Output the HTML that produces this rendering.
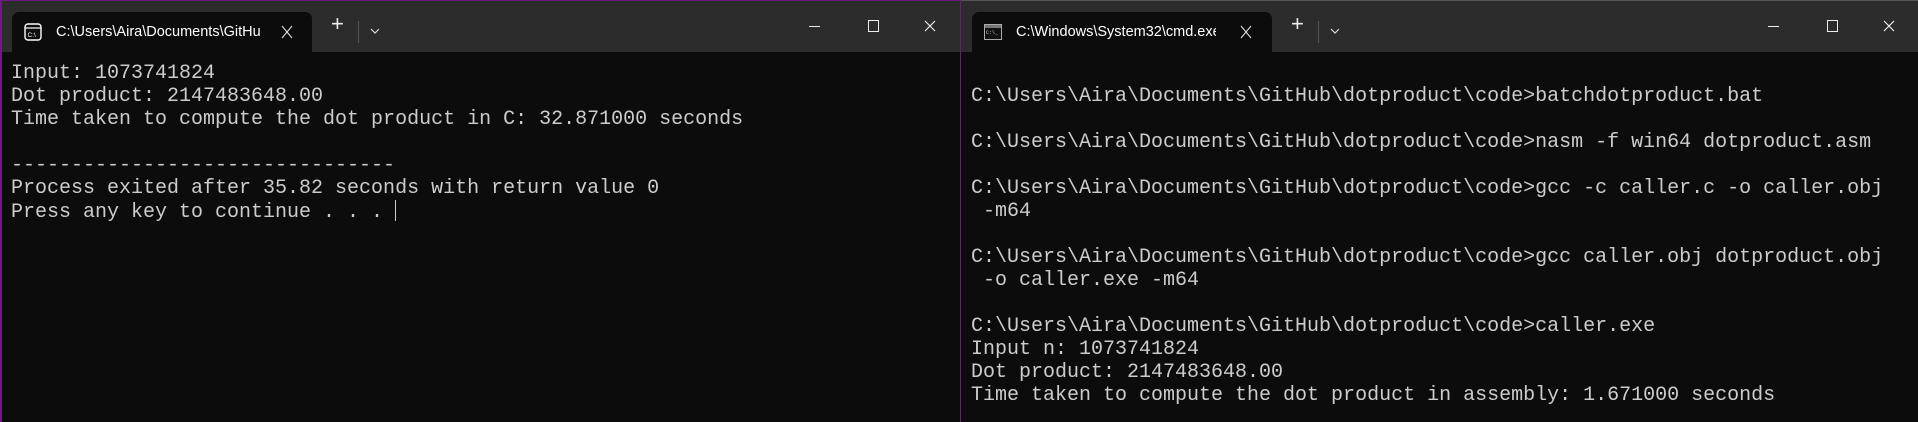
<!DOCTYPE html>
<html><head><meta charset="utf-8"><style>
*{margin:0;padding:0;box-sizing:border-box}
body{width:1918px;height:422px;background:#0c0c0c;position:relative;overflow:hidden;font-family:"Liberation Sans",sans-serif}
.win{position:absolute;top:0;height:422px;background:#0c0c0c}
.bar{position:absolute;left:0;top:0;right:0;height:51px;background:#2c2c2c}
.tab{position:absolute;top:11px;height:40px;width:300px;background:#0c0c0c;border-radius:7px 7px 0 0}
.tt{position:absolute;top:12px;color:#fff;font-size:14.5px;white-space:nowrap}
.x{position:absolute;top:13px}
.term{position:absolute;top:61px;font-family:"Liberation Mono",monospace;font-size:20px;line-height:23px;color:#cccccc;white-space:pre}
.ctl{position:absolute;color:#eee;top:12px;font-size:18px}
</style></head><body>
<div class="win" style="left:0;width:961px;border-left:2px solid #6e1a80;border-top:1px solid #6e1a80;border-right:1px solid #6e1a80">
 <div class="bar"></div>
 <div class="tab" style="left:10px">
  <svg style="position:absolute;left:12px;top:11px" width="18" height="18" viewBox="0 0 18 18"><rect x="1" y="1" width="16" height="16" rx="3" fill="none" stroke="#fff" stroke-width="1.4"/><line x1="1" y1="5" x2="17" y2="5" stroke="#fff" stroke-width="1.2"/><text x="3.5" y="14" font-size="6.5" fill="#fff" font-family="Liberation Sans">C:\</text></svg>
  <div class="tt" style="left:44px;width:204px;overflow:hidden">C:\Users\Aira\Documents\GitHub</div>
  <svg class="x" style="left:269px" width="12" height="14"><path d="M1 1L11 13M11 1L1 13" stroke="#ddd" stroke-width="1.1"/></svg>
 </div>
 <div class="ctl" style="left:329px;top:10px;font-size:22px;font-weight:300">+</div>
 <div style="position:absolute;left:356px;top:20px;width:1px;height:22px;background:#555"></div>
 <svg style="position:absolute;left:368px;top:27px" width="10" height="6"><path d="M1 1 L5 5 L9 1" stroke="#ddd" fill="none" stroke-width="1.2"/></svg>
 <div style="position:absolute;left:807px;top:25px;width:11px;height:1px;background:#eee"></div>
 <div style="position:absolute;left:866px;top:19px;width:11px;height:12px;border:1.3px solid #eee"></div>
 <svg style="position:absolute;left:922px;top:19px" width="12" height="12"><path d="M1 1L11 11M11 1L1 11" stroke="#eee" stroke-width="1.2"/></svg>
 <div class="term" style="left:9px">Input: 1073741824
Dot product: 2147483648.00
Time taken to compute the dot product in C: 32.871000 seconds

--------------------------------
Process exited after 35.82 seconds with return value 0
Press any key to continue . . . <span style="display:inline-block;width:1px;height:21px;background:#ccc;vertical-align:-4px"></span></div>
</div>
<div class="win" style="left:961px;width:957px;border-top:1px solid #555">
 <div class="bar"></div>
 <div class="tab" style="left:11px">
  <svg style="position:absolute;left:12px;top:12px" width="18" height="16" viewBox="0 0 18 16"><rect x="0.5" y="0.5" width="17" height="15" fill="#111" stroke="#aaa"/><rect x="1" y="1" width="16" height="3" fill="#777"/><text x="2" y="10" font-size="5" fill="#ccc" font-family="Liberation Mono">C:\_</text></svg>
  <div class="tt" style="left:44px;width:200px;overflow:hidden">C:\Windows\System32\cmd.exe</div>
  <svg class="x" style="left:268px" width="12" height="14"><path d="M1 1L11 13M11 1L1 13" stroke="#ddd" stroke-width="1.1"/></svg>
 </div>
 <div class="ctl" style="left:330px;top:10px;font-size:22px;font-weight:300">+</div>
 <div style="position:absolute;left:357px;top:20px;width:1px;height:22px;background:#555"></div>
 <svg style="position:absolute;left:369px;top:27px" width="10" height="6"><path d="M1 1 L5 5 L9 1" stroke="#ddd" fill="none" stroke-width="1.2"/></svg>
 <div style="position:absolute;left:807px;top:25px;width:11px;height:1px;background:#eee"></div>
 <div style="position:absolute;left:866px;top:19px;width:11px;height:12px;border:1.3px solid #eee"></div>
 <svg style="position:absolute;left:922px;top:19px" width="12" height="12"><path d="M1 1L11 11M11 1L1 11" stroke="#eee" stroke-width="1.2"/></svg>
 <div class="term" style="left:10px">
C:\Users\Aira\Documents\GitHub\dotproduct\code>batchdotproduct.bat

C:\Users\Aira\Documents\GitHub\dotproduct\code>nasm -f win64 dotproduct.asm

C:\Users\Aira\Documents\GitHub\dotproduct\code>gcc -c caller.c -o caller.obj
 -m64

C:\Users\Aira\Documents\GitHub\dotproduct\code>gcc caller.obj dotproduct.obj
 -o caller.exe -m64

C:\Users\Aira\Documents\GitHub\dotproduct\code>caller.exe
Input n: 1073741824
Dot product: 2147483648.00
Time taken to compute the dot product in assembly: 1.671000 seconds</div>
</div>
</body></html>
